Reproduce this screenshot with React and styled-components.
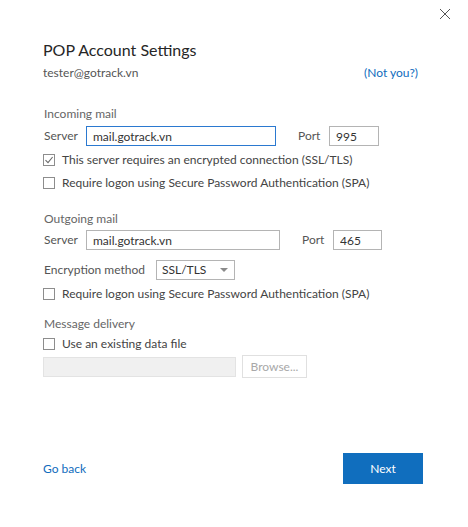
import React from "react";
import styled, { createGlobalStyle } from "styled-components";

const GlobalStyle = createGlobalStyle`
  html, body {
    margin: 0;
    padding: 0;
    background: #ffffff;
  }
  body {
    font-family: "Segoe UI", Lato, "Open Sans", sans-serif;
    color: #444444;
  }
`;

const Dialog = styled.div`
  width: 468px;
  height: 527px;
  box-sizing: border-box;
  display: flex;
  flex-direction: column;
  background: #ffffff;
`;

const TopBar = styled.div`
  display: flex;
  justify-content: flex-end;
  padding: 8px 15px 0 0;
  height: 14px;
`;

const CloseButton = styled.button`
  border: none;
  background: none;
  padding: 0;
  width: 14px;
  height: 14px;
  cursor: pointer;
  display: flex;
`;

const Body = styled.div`
  flex: 1;
  display: flex;
  flex-direction: column;
  padding: 0 45px 0 43px;
`;

const Title = styled.h1`
  margin: 17px 0 0;
  font-size: 16px;
  line-height: 22px;
  font-weight: 400;
  color: #262626;
`;

const AccountRow = styled.div`
  display: flex;
  justify-content: space-between;
  align-items: center;
  margin-top: 3px;
  padding-right: 5px;
  font-size: 12px;
  line-height: 18px;
`;

const Email = styled.span`
  color: #555555;
`;

const Link = styled.a`
  color: #0f6cbd;
  text-decoration: none;
  cursor: pointer;
  font-size: ${(p) => p.$size || 12}px;
`;

const Section = styled.div`
  display: flex;
  flex-direction: column;
  margin-top: ${(p) => p.$top}px;
`;

const SectionLabel = styled.div`
  font-size: 12px;
  line-height: 16px;
  color: #666666;
  padding-left: 1px;
`;

const FieldRow = styled.div`
  display: flex;
  align-items: center;
  margin-top: ${(p) => p.$top || 0}px;
  font-size: 12px;
  line-height: 16px;
`;

const Label = styled.label`
  color: #555555;
  width: ${(p) => p.$width}px;
  padding-left: ${(p) => p.$indent || 0}px;
  box-sizing: border-box;
  flex-shrink: 0;
`;

const TextInput = styled.input`
  box-sizing: border-box;
  width: ${(p) => p.$width}px;
  height: ${(p) => p.$height || 20}px;
  border: 1px solid ${(p) => (p.$focused ? "#2b79d0" : "#b4b4b4")};
  background: ${(p) => (p.disabled ? "#f0f0f0" : "#ffffff")};
  ${(p) => p.disabled && "border-color: #e3e3e3;"}
  padding: 0 6px;
  font-family: inherit;
  font-size: 12px;
  color: #333333;
  outline: none;
`;

const Select = styled.div`
  box-sizing: border-box;
  width: 79px;
  height: 20px;
  border: 1px solid #b4b4b4;
  display: flex;
  align-items: center;
  justify-content: space-between;
  padding: 0 6px 0 5px;
  color: #333333;
`;

const Caret = styled.span`
  width: 0;
  height: 0;
  border-left: 4px solid transparent;
  border-right: 4px solid transparent;
  border-top: 4px solid #8a8a8a;
`;

const CheckRow = styled.label`
  display: flex;
  align-items: center;
  margin-top: ${(p) => p.$top}px;
  font-size: 12px;
  line-height: 16px;
  color: #444444;
  cursor: pointer;
`;

const Box = styled.span`
  box-sizing: border-box;
  width: 12px;
  height: 12px;
  border: 1px solid #8d8d8d;
  margin-right: 7px;
  display: flex;
  align-items: center;
  justify-content: center;
  flex-shrink: 0;
`;

const BrowseButton = styled.button`
  box-sizing: border-box;
  width: 65px;
  height: 23px;
  margin-left: 6px;
  border: 1px solid #e0e0e0;
  background: #ffffff;
  color: #a8a8a8;
  font-family: inherit;
  font-size: 12px;
  padding: 0;
`;

const Footer = styled.div`
  display: flex;
  justify-content: space-between;
  align-items: center;
  margin-top: auto;
  margin-bottom: 43px;
`;

const PrimaryButton = styled.button`
  width: 80px;
  height: 31px;
  border: none;
  background: #106ebe;
  color: #ffffff;
  font-family: inherit;
  font-size: 12px;
  cursor: pointer;
`;

function Checkbox({ checked, children, top }) {
  return (
    <CheckRow $top={top}>
      <Box>
        {checked && (
          <svg width="10" height="10" viewBox="0 0 10 10">
            <path d="M1.5 5.2 L4 7.7 L8.6 2" fill="none" stroke="#6b6b6b" strokeWidth="1.1" />
          </svg>
        )}
      </Box>
      {children}
    </CheckRow>
  );
}

export default function App() {
  return (
    <>
      <GlobalStyle />
      <Dialog>
        <TopBar>
          <CloseButton aria-label="Close">
            <svg width="12" height="12" viewBox="0 0 12 12">
              <path d="M1 1 L11 11 M11 1 L1 11" stroke="#555555" strokeWidth="1" />
            </svg>
          </CloseButton>
        </TopBar>
        <Body>
          <Title>POP Account Settings</Title>
          <AccountRow>
            <Email>tester@gotrack.vn</Email>
            <Link>(Not you?)</Link>
          </AccountRow>

          <Section $top={24}>
            <SectionLabel>Incoming mail</SectionLabel>
            <FieldRow $top={4}>
              <Label $width={43} $indent={1}>Server</Label>
              <TextInput $width={190} $focused defaultValue="mail.gotrack.vn" />
              <Label $width={53} $indent={22}>Port</Label>
              <TextInput $width={50} defaultValue="995" />
            </FieldRow>
            <Checkbox checked top={6}>
              This server requires an encrypted connection (SSL/TLS)
            </Checkbox>
            <Checkbox top={7}>
              Require logon using Secure Password Authentication (SPA)
            </Checkbox>
          </Section>

          <Section $top={20}>
            <SectionLabel>Outgoing mail</SectionLabel>
            <FieldRow $top={3}>
              <Label $width={43} $indent={1}>Server</Label>
              <TextInput $width={194} defaultValue="mail.gotrack.vn" />
              <Label $width={53} $indent={22}>Port</Label>
              <TextInput $width={49} defaultValue="465" />
            </FieldRow>
            <FieldRow $top={10}>
              <Label $width={113} $indent={1}>Encryption method</Label>
              <Select>
                SSL/TLS
                <Caret />
              </Select>
            </FieldRow>
            <Checkbox top={6}>
              Require logon using Secure Password Authentication (SPA)
            </Checkbox>
          </Section>

          <Section $top={14}>
            <SectionLabel>Message delivery</SectionLabel>
            <Checkbox top={4}>Use an existing data file</Checkbox>
            <FieldRow $top={3}>
              <TextInput $width={193} disabled />
              <BrowseButton disabled>Browse...</BrowseButton>
            </FieldRow>
          </Section>

          <Footer>
            <Link $size={12}>Go back</Link>
            <PrimaryButton>Next</PrimaryButton>
          </Footer>
        </Body>
      </Dialog>
    </>
  );
}
